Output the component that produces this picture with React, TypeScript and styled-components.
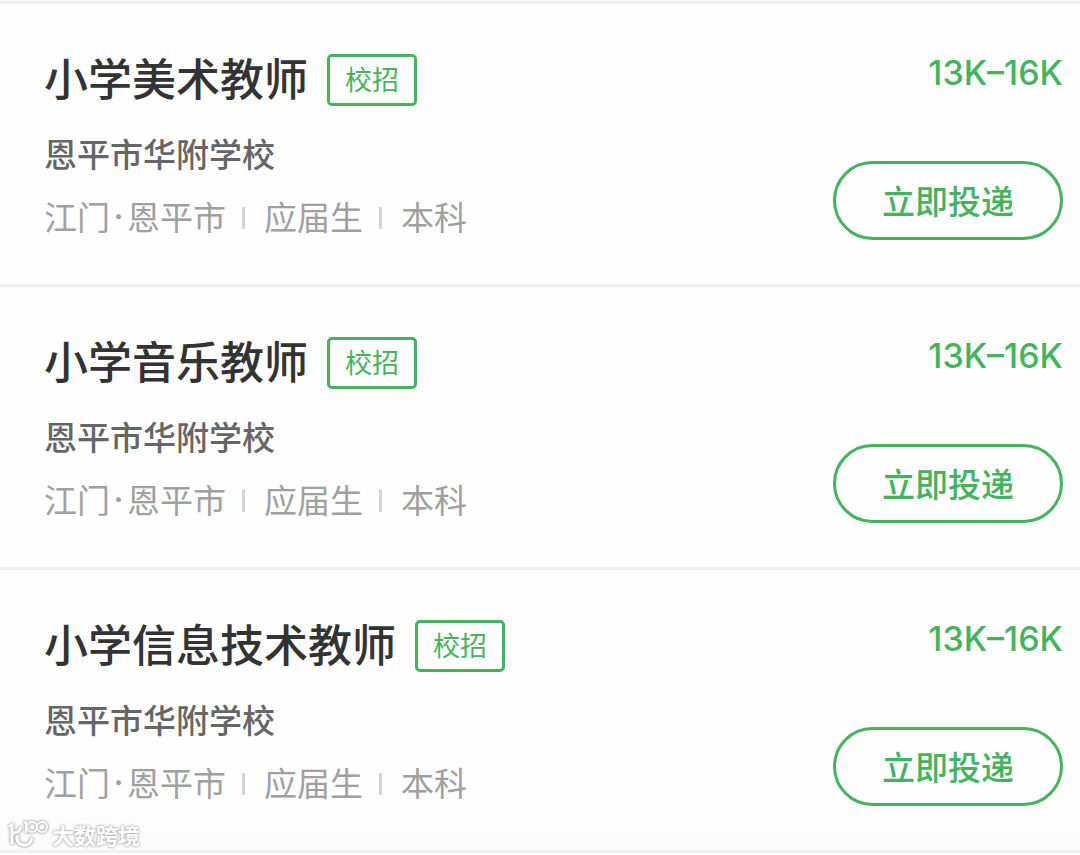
import React from 'react';
import styled, { createGlobalStyle } from 'styled-components';

const GlobalStyle = createGlobalStyle`
  *, *::before, *::after {
    box-sizing: border-box;
  }

  body {
    margin: 0;
    background: #fefefe;
    font-family: 'Noto Sans CJK SC', sans-serif;
  }
`;

const green = '#45b35e';

const Page = styled.main`
  position: relative;
  padding-top: 1px;
`;

const JobList = styled.ul`
  margin: 0;
  padding: 0;
  list-style: none;
  border-top: 3px solid #f1f1f1;
`;

const JobItem = styled.li`
  display: flex;
  justify-content: space-between;
  padding: 48px 17px 44px 44px;
  border-bottom: 3px solid #f1f1f1;

  &:last-child {
    background: linear-gradient(to bottom, transparent 80%, #fbfbfb);
  }
`;

const JobInfo = styled.div`
  display: flex;
  flex-direction: column;
  min-width: 0;
`;

const TitleRow = styled.div`
  display: flex;
  align-items: center;
  gap: 19px;
  height: 56px;
`;

const Title = styled.h2`
  margin: 0;
  padding-bottom: 6px;
  font-size: 44px;
  line-height: 50px;
  font-weight: 500;
  color: #333;
`;

const Tag = styled.span`
  padding: 0 15px 2px;
  border: 3px solid ${green};
  border-radius: 5px;
  font-size: 27px;
  line-height: 44px;
  color: ${green};
`;

const Company = styled.p`
  margin: 21px 0 0;
  font-size: 33px;
  line-height: 48px;
  font-weight: 500;
  color: #666;
`;

const Meta = styled.div`
  display: flex;
  align-items: center;
  margin-top: 15px;
  font-size: 33px;
  line-height: 48px;
  font-weight: 400;
  color: #a0a0a0;
`;

const MetaDot = styled.span`
  width: 17px;
  text-align: center;
  font-family: Inter, sans-serif;
  font-weight: 500;
`;

const MetaItem = styled.span`
  & + & {
    display: flex;
    align-items: center;
  }

  & + &::before {
    content: '';
    width: 3px;
    height: 22px;
    margin: 4px 19px 0 16px;
    background: #d4d4d4;
  }
`;

const Place = styled.span`
  display: flex;
`;

const JobAction = styled.div`
  display: flex;
  flex-direction: column;
  align-items: flex-end;
  justify-content: space-between;
`;

const Salary = styled.span`
  font-family: Inter, sans-serif;
  font-size: 34px;
  line-height: 42px;
  font-weight: 500;
  color: ${green};
`;

const ApplyButton = styled.button`
  width: 230px;
  height: 79px;
  padding: 0 0 2px;
  border: 3px solid ${green};
  border-radius: 40px;
  background: transparent;
  font-family: inherit;
  font-size: 33px;
  line-height: 48px;
  font-weight: 500;
  color: ${green};
  cursor: pointer;
`;

const Watermark = styled.div`
  position: absolute;
  left: 8px;
  bottom: 3px;
  display: flex;
  align-items: center;
  gap: 3px;
  font-size: 22px;
  line-height: 32px;
  font-weight: 700;
  color: #fff;
  text-shadow: 0 0 2px #aaa, 0 0 3px #aaa;
`;

const WatermarkLogo = styled.svg`
  overflow: visible;
  filter: drop-shadow(0 0 1px #aaa) drop-shadow(0 0 1px #bbb);
`;

interface Job {
  title: string;
  tag: string;
  company: string;
  city: string;
  district: string;
  requirements: string[];
  salary: string;
}

const common = {
  tag: '校招',
  company: '恩平市华附学校',
  city: '江门',
  district: '恩平市',
  requirements: ['应届生', '本科'],
  salary: '13K–16K',
};

const jobs: Job[] = [
  { title: '小学美术教师', ...common },
  { title: '小学音乐教师', ...common },
  { title: '小学信息技术教师', ...common },
];

const JobRow = ({ job }: { job: Job }) => (
  <JobItem>
    <JobInfo>
      <TitleRow>
        <Title>{job.title}</Title>
        <Tag>{job.tag}</Tag>
      </TitleRow>
      <Company>{job.company}</Company>
      <Meta>
        <MetaItem>
          <Place>
            {job.city}
            <MetaDot>·</MetaDot>
            {job.district}
          </Place>
        </MetaItem>
        {job.requirements.map((item) => (
          <MetaItem key={item}>{item}</MetaItem>
        ))}
      </Meta>
    </JobInfo>
    <JobAction>
      <Salary>{job.salary}</Salary>
      <ApplyButton type="button">立即投递</ApplyButton>
    </JobAction>
  </JobItem>
);

export default function App() {
  return (
    <>
      <GlobalStyle />
      <Page>
        <JobList>
          {jobs.map((job) => (
            <JobRow key={job.title} job={job} />
          ))}
        </JobList>
        <Watermark>
          <WatermarkLogo width="41" height="30" viewBox="0 0 41 30" fill="none" stroke="#fff" strokeWidth="3" aria-hidden="true">
            <path d="M1 8 L4 6 V25" />
            <path d="M13 8 C12 12 9 14 5 14" />
            <path d="M9 16 C7 28 22 30 24 19" />
            <path d="M16 4 L18 3 V14" strokeWidth="2" />
            <circle cx="24" cy="8" r="5" strokeWidth="2" />
            <circle cx="34" cy="8" r="5" strokeWidth="2" />
          </WatermarkLogo>
          <span>大数跨境</span>
        </Watermark>
      </Page>
    </>
  );
}
